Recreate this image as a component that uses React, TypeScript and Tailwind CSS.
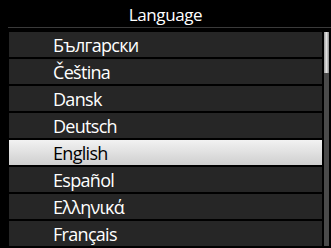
const languages = [
  'Български',
  'Čeština',
  'Dansk',
  'Deutsch',
  'English',
  'Español',
  'Ελληνικά',
  'Français',
];

const selected = 'English';

export default function App() {
  return (
    <div
      className="w-[331px] h-[248px] bg-black overflow-hidden text-white"
      style={{ fontFamily: '"Open Sans", "Noto Sans", sans-serif' }}
    >
      <div className="h-[27px] flex items-center justify-center text-[17px] tracking-[-0.4px] leading-none pt-[1px]">
        Language
      </div>
      <div className="h-px bg-[#3a3a3a] ml-[8px]" />
      <div className="flex pl-[9px] pt-[4px]">
        <div className="flex flex-col gap-[2px] w-[313px]">
          {languages.map((lang) => {
            const active = lang === selected;
            return (
              <div
                key={lang}
                className={
                  active
                    ? 'h-[25px] flex items-center pl-[44px] text-[18px] tracking-[-0.7px] leading-none text-black bg-gradient-to-b from-[#f2f2f2] to-[#cfcfcf]'
                    : 'h-[25px] flex items-center pl-[44px] text-[18px] tracking-[-0.7px] leading-none text-white bg-[#262626]'
                }
              >
                {lang}
              </div>
            );
          })}
        </div>
        <div className="ml-[2px] w-[5px] h-[214px] bg-[#4a4a4a] relative">
          <div className="absolute left-0 top-0 w-[5px] h-[41px] bg-gradient-to-r from-[#9a9a9a] via-[#e0e0e0] to-[#8a8a8a]" />
        </div>
      </div>
    </div>
  );
}
